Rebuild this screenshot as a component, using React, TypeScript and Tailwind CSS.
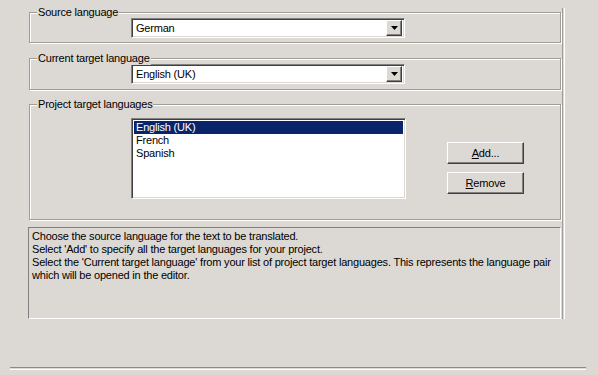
import React from "react";

const raised =
  "border border-t-white border-l-white border-r-[#404040] border-b-[#404040] shadow-[inset_-1px_-1px_0_#808080] bg-[#dcd9d4]";
const sunken =
  "border border-t-[#808080] border-l-[#808080] border-r-white border-b-white shadow-[inset_1px_1px_0_#404040,inset_-1px_-1px_0_#dcd9d4]";
const flatSunken = "border border-t-[#808080] border-l-[#808080] border-r-white border-b-white";

function GroupBox({
  label,
  className,
  children,
}: {
  label: string;
  className: string;
  children: React.ReactNode;
}) {
  return (
    <div
      className={`relative border border-[#a09d97] shadow-[inset_1px_1px_0_#fff,1px_1px_0_#fff] ${className}`}
    >
      <span className="absolute -top-[7px] left-[7px] bg-[#dcd9d4] px-[1px] leading-[13px]">
        {label}
      </span>
      {children}
    </div>
  );
}

function Combo({ value }: { value: string }) {
  return (
    <div className={`flex h-[20px] w-[274px] items-center bg-white p-[2px] ${sunken}`}>
      <span className="flex-1 pl-[2px] leading-[13px]">{value}</span>
      <div className={`flex h-[16px] w-[16px] items-center justify-center ${raised}`}>
        <svg width="7" height="4" viewBox="0 0 7 4">
          <path d="M0 0h7L3.5 4z" fill="#000" />
        </svg>
      </div>
    </div>
  );
}

function Btn({ first, rest }: { first: string; rest: string }) {
  return (
    <div className={`flex h-[22px] w-[77px] items-center justify-center leading-[13px] ${raised}`}>
      <span>
        <span className="underline">{first}</span>
        {rest}
      </span>
    </div>
  );
}

export default function App() {
  return (
    <div className="relative h-[375px] w-[598px] overflow-hidden bg-[#dcd9d4] font-['Liberation_Sans',sans-serif] text-[11px] tracking-[-0.2px] text-black">
      <div className="flex">
        <div className="ml-[29px] flex w-[532px] flex-col pt-[12px]">
          <GroupBox label="Source language" className="h-[31px] pl-[101px] pt-[5px]">
            <Combo value="German" />
          </GroupBox>

          <GroupBox label="Current target language" className="mt-[15px] h-[32px] pl-[101px] pt-[5px]">
            <Combo value="English (UK)" />
          </GroupBox>

          <GroupBox label="Project target languages" className="mt-[14px] flex h-[116px] pl-[101px] pt-[13px]">
            <div className={`h-[81px] w-[275px] bg-white p-[2px] ${sunken}`}>
              <div className="bg-[#0a246a] pl-[2px] leading-[13px] text-white">English (UK)</div>
              <div className="pl-[2px] leading-[13px]">French</div>
              <div className="pl-[2px] leading-[13px]">Spanish</div>
            </div>
            <div className="ml-[41px] mt-[24px] flex flex-col gap-[8px]">
              <Btn first="A" rest="dd..." />
              <Btn first="R" rest="emove" />
            </div>
          </GroupBox>

          <div className={`-ml-[1px] mt-[7px] h-[92px] w-[533px] px-[2px] pt-[2px] leading-[13px] ${flatSunken}`}>
            <div className="pl-[1px]">Choose the source language for the text to be translated.</div>
            <div className="pl-[1px]">Select 'Add' to specify all the target languages for your project.</div>
            <div className="pl-[1px]">
              Select the 'Current target language' from your list of project target languages. This represents the
              language pair which will be opened in the editor.
            </div>
          </div>
        </div>
        <div className="ml-[1px] mt-[8px] h-[311px] w-[2px] border-l border-[#a09d97] shadow-[1px_0_0_#fff]" />
      </div>
      <div className="ml-[10px] mt-[48px] h-[2px] w-[576px] border-t border-[#8c8a85] shadow-[0_1px_0_#fff]" />
    </div>
  );
}
